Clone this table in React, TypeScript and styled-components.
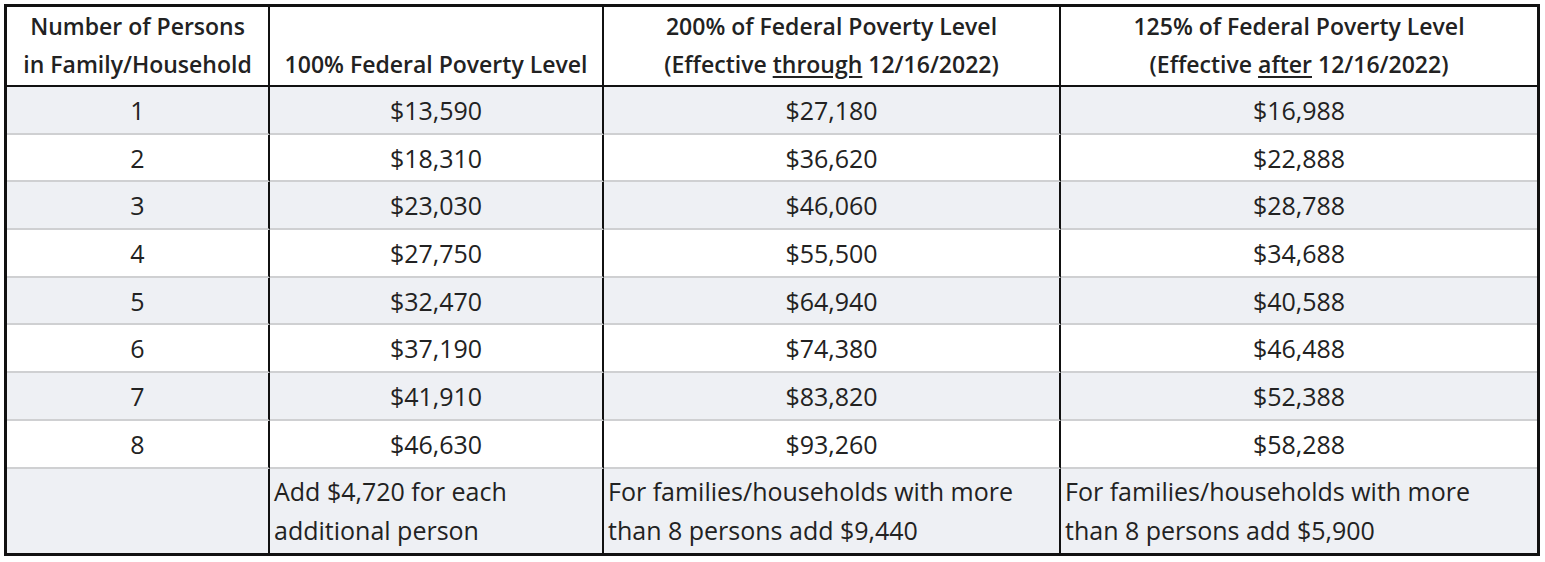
import React from 'react';
import styled, { createGlobalStyle } from 'styled-components';

const GlobalStyle = createGlobalStyle`
  body {
    margin: 0;
    padding: 4px;
    background: #ffffff;
    font-family: "Open Sans", Lato, sans-serif;
    color: #222222;
  }
`;

interface IRow {
  readonly persons: number;
  readonly base: string;
  readonly through: string;
  readonly after: string;
}

const rows: IRow[] = [
  { persons: 1, base: '$13,590', through: '$27,180', after: '$16,988' },
  { persons: 2, base: '$18,310', through: '$36,620', after: '$22,888' },
  { persons: 3, base: '$23,030', through: '$46,060', after: '$28,788' },
  { persons: 4, base: '$27,750', through: '$55,500', after: '$34,688' },
  { persons: 5, base: '$32,470', through: '$64,940', after: '$40,588' },
  { persons: 6, base: '$37,190', through: '$74,380', after: '$46,488' },
  { persons: 7, base: '$41,910', through: '$83,820', after: '$52,388' },
  { persons: 8, base: '$46,630', through: '$93,260', after: '$58,288' },
];

const App = () => {
  return (
    <>
      <GlobalStyle />
      <Table>
        <colgroup>
          <col style={{ width: 263 }} />
          <col style={{ width: 334 }} />
          <col style={{ width: 457 }} />
          <col />
        </colgroup>
        <thead>
          <tr>
            <HeadCell>Number of Persons<br />in Family/Household</HeadCell>
            <HeadCell>100% Federal Poverty Level</HeadCell>
            <HeadCell>
              200% of Federal Poverty Level<br />
              (Effective <u>through</u> 12/16/2022)
            </HeadCell>
            <HeadCell>
              125% of Federal Poverty Level<br />
              (Effective <u>after</u> 12/16/2022)
            </HeadCell>
          </tr>
        </thead>
        <tbody>
          { rows.map((row, index) => (
            <Row key={row.persons} $shaded={index % 2 === 0}>
              <Cell>{ row.persons }</Cell>
              <Cell>{ row.base }</Cell>
              <Cell>{ row.through }</Cell>
              <Cell>{ row.after }</Cell>
            </Row>
          )) }
          <Row $shaded $last>
            <Cell />
            <NoteCell>Add $4,720 for each<br />additional person</NoteCell>
            <NoteCell>For families/households with more<br />than 8 persons add $9,440</NoteCell>
            <NoteCell>For families/households with more<br />than 8 persons add $5,900</NoteCell>
          </Row>
        </tbody>
      </Table>
    </>
  );
};

export default App;

const Table = styled.table`
  width: 1536px;
  border: 3px solid #111111;
  border-spacing: 0;
  border-collapse: separate;
  table-layout: fixed;
  font-size: 25px;
`;

const HeadCell = styled.th`
  height: 78px;
  padding: 0 2px 2px;
  box-sizing: border-box;
  vertical-align: bottom;
  text-align: center;
  font-weight: 600;
  font-size: 23px;
  line-height: 38px;
  color: #222222;
  border-right: 2px solid #111111;
  border-bottom: 2px solid #111111;

  &:last-child {
    border-right: none;
  }

  u {
    text-underline-offset: 3px;
  }
`;

const Row = styled.tr<{ $shaded?: boolean; $last?: boolean }>`
  background: ${({ $shaded }) => ($shaded ? '#eef0f4' : '#ffffff')};

  td {
    height: ${({ $last }) => ($last ? '84px' : '45.7px')};
    border-bottom: ${({ $last }) => ($last ? 'none' : '2px solid #cfd0d2')};
  }
`;

const Cell = styled.td`
  padding: 0 4px;
  text-align: center;
  vertical-align: middle;
  line-height: 38px;
  border-right: 2px solid #111111;

  &:last-child {
    border-right: none;
  }
`;

const NoteCell = styled(Cell)`
  text-align: left;
  line-height: 39px;
`;
